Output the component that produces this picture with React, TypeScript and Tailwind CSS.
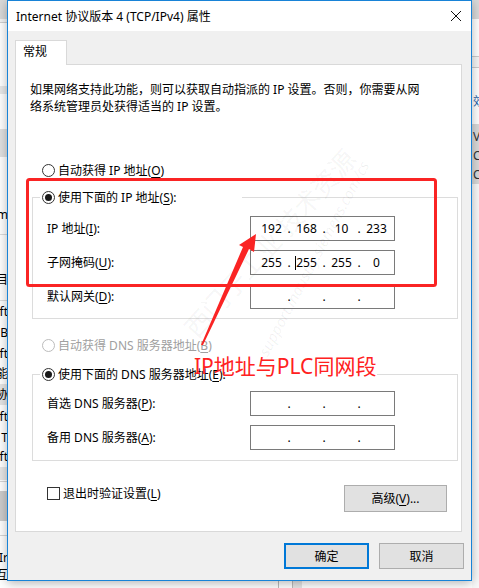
import React from "react";

const K = ({ c }: { c: string }) => (
  <span className="underline underline-offset-2">{c}</span>
);

interface RadioProps {
  checked?: boolean;
  disabled?: boolean;
  children: React.ReactNode;
}

const Radio: React.FC<RadioProps> = ({ checked, disabled, children }) => (
  <div
    className={
      disabled
        ? "flex h-[17px] items-center text-[#a0a0a0]"
        : "flex h-[17px] items-center text-black"
    }
  >
    <span
      className={
        disabled
          ? "flex h-[13px] w-[13px] shrink-0 items-center justify-center rounded-full border border-[#bcbcbc] bg-white"
          : "flex h-[13px] w-[13px] shrink-0 items-center justify-center rounded-full border border-[#333333] bg-white"
      }
    >
      {checked && <span className="h-[7px] w-[7px] rounded-full bg-[#1a1a1a]" />}
    </span>
    <span className="ml-[3px] whitespace-nowrap">{children}</span>
  </div>
);

const IpBox = ({ parts, caret }: { parts: string[]; caret?: boolean }) => (
  <div className="relative flex h-[25px] w-[145px] items-center border border-[#7a7a7a] bg-white pl-[5px]">
    {parts.map((p, i) => (
      <React.Fragment key={i}>
        <span className="w-[31px] text-center">{p}</span>
        {i < 3 && <span className="w-[4px] text-center">.</span>}
      </React.Fragment>
    ))}
    {caret && <span className="absolute left-[44px] top-[5px] h-[14px] w-px bg-black" />}
  </div>
);

const Field = ({
  label,
  parts = ["", "", "", ""],
  caret,
}: {
  label: React.ReactNode;
  parts?: string[];
  caret?: boolean;
}) => (
  <div className="flex items-center pl-[14px]">
    <span className="w-[203px] whitespace-nowrap">{label}</span>
    <IpBox parts={parts} caret={caret} />
  </div>
);

// bits of the windows lying behind the dialog
const leftBits: { h: number; bg?: string; t?: string }[] = [
  { h: 19, bg: "bg-[#d9d9d9]" },
  { h: 3, bg: "bg-[#f3f3f3]" },
  { h: 1, bg: "bg-[#d0d0d0]" },
  { h: 63 },
  { h: 8, bg: "bg-[#e8e8e8]" },
  { h: 35 },
  { h: 28, bg: "bg-[#e1e1e1]" },
  { h: 48 },
  { h: 18, t: "m" },
  { h: 11 },
  { h: 1, bg: "bg-[#dcdcdc]" },
  { h: 36 },
  { h: 17, t: "目" },
  { h: 12 },
  { h: 1, bg: "bg-[#dcdcdc]" },
  { h: 21, t: "ft" },
  { h: 21, t: "B" },
  { h: 20, t: "ft" },
  { h: 21, t: "能" },
  { h: 21, t: "协", bg: "bg-[#e5e5e5]" },
  { h: 22, t: "ft" },
  { h: 20, t: "T" },
  { h: 18, t: "ft" },
  { h: 2 },
  { h: 13, bg: "bg-[#e6e6e6]" },
  { h: 1 },
  { h: 1, bg: "bg-[#d6d6d6]" },
  { h: 9 },
  { h: 30, bg: "bg-[#cccccc]" },
  { h: 14 },
  { h: 1, bg: "bg-[#d6d6d6]" },
  { h: 12 },
  { h: 18, t: "Ir" },
  { h: 16, t: "互" },
];

const rightBits: { h: number; bg?: string; t?: string; blue?: boolean }[] = [
  { h: 19, bg: "bg-[#d9d9d9]" },
  { h: 37 },
  { h: 1, bg: "bg-[#cccccc]" },
  { h: 10, bg: "bg-[#f5f5f5]" },
  { h: 1, bg: "bg-[#cccccc]" },
  { h: 24 },
  { h: 18, t: "效", blue: true },
  { h: 14 },
  { h: 3, bg: "bg-[#d9d9d9]" },
  { h: 19, t: "V", bg: "bg-[#d9d9d9]" },
  { h: 19, t: "C", bg: "bg-[#d9d9d9]" },
  { h: 19, t: "C", bg: "bg-[#d9d9d9]" },
];

export default function App() {
  return (
    <div className="relative h-[588px] w-[479px] overflow-hidden bg-white font-['Noto_Sans','Noto_Sans_CJK_SC',sans-serif] text-[12px] leading-[17px] text-black">
      <div className="flex h-full">
        {/* left background window */}
        <div className="flex w-[7px] shrink-0 flex-col overflow-hidden">
          {leftBits.map((b, i) => (
            <div
              key={i}
              style={{ height: b.h }}
              className={`flex shrink-0 items-center justify-end overflow-hidden whitespace-nowrap ${b.bg ?? "bg-white"}`}
            >
              {b.t && <span className="-mr-[1px] text-[12px]">{b.t}</span>}
            </div>
          ))}
        </div>

        <div className="flex w-[465px] shrink-0 flex-col">
          {/* dialog window */}
          <div className="relative z-10 flex h-[581px] flex-col border border-[#1883d7] bg-[#f0f0f0] shadow-[0_2px_10px_rgba(0,0,0,0.3)]">
            <div className="flex h-[30px] items-center justify-between bg-white pl-[8px] pr-[10px]">
              <span className="whitespace-nowrap">Internet 协议版本 4 (TCP/IPv4) 属性</span>
              <svg width="10" height="10" viewBox="0 0 10 10" stroke="#111" strokeWidth="1">
                <path d="M0 0L10 10M10 0L0 10" />
              </svg>
            </div>

            <div className="flex flex-1 flex-col pl-[7px] pr-[9px] pt-[9px]">
              <div className="relative z-10 -mb-px h-[25px] w-[52px] border border-b-0 border-[#d9d9d9] bg-white pl-[7px] pt-[2px]">
                常规
              </div>
              <div className="h-[468px] border border-[#d9d9d9] bg-white">
                <p className="whitespace-nowrap pl-[14px] pt-[16px]">
                  如果网络支持此功能，则可以获取自动指派的 IP 设置。否则，你需要从网
                  <br />
                  络系统管理员处获得适当的 IP 设置。
                </p>

                <div className="mt-[47px] pl-[26px]">
                  <Radio>
                    自动获得 IP 地址(<K c="O" />)
                  </Radio>
                </div>

                <fieldset className="ml-[16px] mt-[10px] w-[426px] border border-[#dcdcdc] pb-[9px] pt-[10px]">
                  <legend className="ml-[7px] w-[202px] bg-white pl-[2px]">
                    <Radio checked>
                      使用下面的 IP 地址(<K c="S" />):
                    </Radio>
                  </legend>
                  <div className="flex flex-col gap-[9px]">
                    <Field
                      label={
                        <>
                          IP 地址(<K c="I" />):
                        </>
                      }
                      parts={["192", "168", "10", "233"]}
                    />
                    <Field
                      label={
                        <>
                          子网掩码(<K c="U" />):
                        </>
                      }
                      parts={["255", "255", "255", "0"]}
                      caret
                    />
                    <Field
                      label={
                        <>
                          默认网关(<K c="D" />):
                        </>
                      }
                    />
                  </div>
                </fieldset>

                <div className="mt-[18px] pl-[26px]">
                  <Radio disabled>
                    自动获得 DNS 服务器地址(<K c="B" />)
                  </Radio>
                </div>

                <fieldset className="ml-[16px] mt-[12px] w-[426px] border border-[#dcdcdc] pb-[10px] pt-[8px]">
                  <legend className="ml-[7px] w-[337px] bg-white pl-[2px]">
                    <Radio checked>
                      使用下面的 DNS 服务器地址(<K c="E" />):
                    </Radio>
                  </legend>
                  <div className="flex flex-col gap-[9px]">
                    <Field
                      label={
                        <>
                          首选 DNS 服务器(<K c="P" />):
                        </>
                      }
                    />
                    <Field
                      label={
                        <>
                          备用 DNS 服务器(<K c="A" />):
                        </>
                      }
                    />
                  </div>
                </fieldset>

                <div className="mt-[24px] flex items-start justify-between">
                  <div className="flex h-[17px] items-center pl-[31px]">
                    <span className="h-[13px] w-[13px] border border-[#333333] bg-white" />
                    <span className="ml-[3px] whitespace-nowrap">
                      退出时验证设置(<K c="L" />)
                    </span>
                  </div>
                  <button className="mr-[14px] h-[27px] w-[103px] border border-[#adadad] bg-[#e1e1e1]">
                    高级(<K c="V" />)...
                  </button>
                </div>
              </div>

              <div className="-mr-[2px] mt-[11px] flex justify-end gap-[10px]">
                <button className="h-[26px] w-[85px] border-2 border-[#0078d7] bg-[#e1e1e1]">确定</button>
                <button className="h-[26px] w-[85px] border border-[#adadad] bg-[#e1e1e1]">取消</button>
              </div>
            </div>
          </div>

          {/* strip of background below the dialog */}
          <div className="flex flex-1">
            <div className="w-[271px] bg-white" />
            <div className="w-px bg-[#bbbbbb]" />
            <div className="w-[13px] bg-white" />
            <div className="w-[10px] border-l border-[#bbbbbb] bg-[#e6e6e6]" />
            <div className="flex-1 bg-white" />
          </div>
        </div>

        {/* right background window */}
        <div className="flex w-[7px] shrink-0 flex-col overflow-hidden bg-[#f9f9f9]">
          {rightBits.map((b, i) => (
            <div
              key={i}
              style={{ height: b.h }}
              className={`flex shrink-0 items-center overflow-hidden whitespace-nowrap ${b.bg ?? "bg-white"}`}
            >
              {b.t && (
                <span className={b.blue ? "ml-[1px] text-[#1f5fa8]" : "ml-[1px] text-[#333]"}>{b.t}</span>
              )}
            </div>
          ))}
        </div>
      </div>

      {/* faint watermark */}
      <div className="pointer-events-none absolute left-[150px] top-[235px] z-20 -rotate-[48deg] whitespace-nowrap text-[26px] text-black/[0.05]">
        西门子工业 技术资源
      </div>
      <div className="pointer-events-none absolute left-[205px] top-[250px] z-20 -rotate-[62deg] whitespace-nowrap text-[15px] italic text-black/[0.06]">
        support.industry.siemens.com/cs
      </div>

      {/* screenshot markup */}
      <svg className="pointer-events-none absolute inset-0 z-30" width="479" height="588">
        <rect x="27.5" y="179.5" width="408" height="106" rx="2" fill="none" stroke="#fa2424" strokeWidth="3" />
        <polygon points="201,345 243,247 239,245 256,234 254,252 249,249 203,345" fill="#fa2424" />
      </svg>
      <div className="pointer-events-none absolute left-[194px] top-[352px] z-30 whitespace-nowrap text-[21px] leading-[28px] text-[#ff2121]">
        IP地址与PLC同网段
      </div>
    </div>
  );
}
